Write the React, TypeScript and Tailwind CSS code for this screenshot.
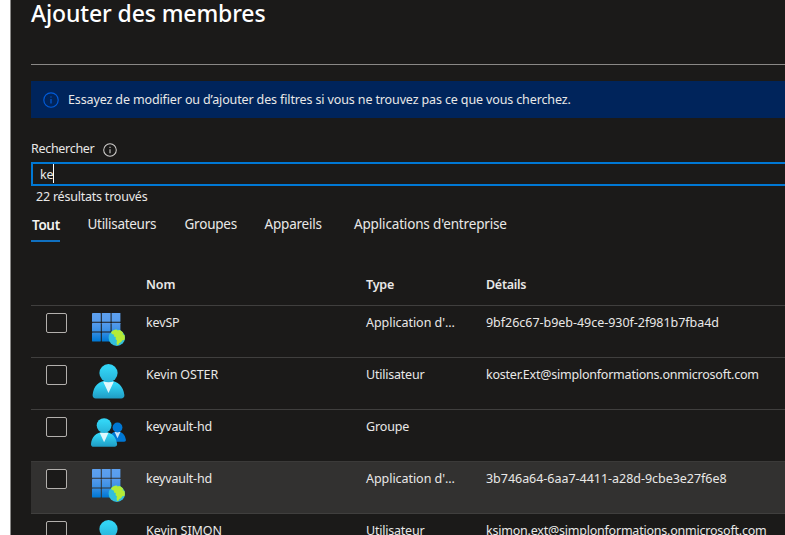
import { useId } from 'react';
import type { ReactNode } from 'react';

type Kind = 'app' | 'user' | 'group';

interface Member {
  name: ReactNode;
  kind: Kind;
  type: ReactNode;
  details?: ReactNode;
  hovered?: boolean;
}

const appType = <span className="tracking-[-0.05px]">Application d'...</span>;
const userType = <span className="tracking-[-0.22px]">Utilisateur</span>;

const members: Member[] = [
  {
    name: <span className="tracking-[-0.15px]">kevSP</span>,
    kind: 'app',
    type: appType,
    details: <span className="tracking-[-0.03px]">9bf26c67-b9eb-49ce-930f-2f981b7fba4d</span>,
  },
  {
    name: <span className="tracking-[-0.12px]">Kevin OSTER</span>,
    kind: 'user',
    type: userType,
    details: <span className="tracking-[-0.22px]">koster.Ext@simplonformations.onmicrosoft.com</span>,
  },
  {
    name: <span className="tracking-[-0.2px]">keyvault-hd</span>,
    kind: 'group',
    type: <span className="tracking-[-0.15px]">Groupe</span>,
  },
  {
    name: <span className="tracking-[-0.2px]">keyvault-hd</span>,
    kind: 'app',
    type: appType,
    details: <span className="tracking-[-0.03px]">3b746a64-6aa7-4411-a28d-9cbe3e27f6e8</span>,
    hovered: true,
  },
  {
    name: <span className="tracking-[-0.08px]">Kevin SIMON</span>,
    kind: 'user',
    type: userType,
    details: <span className="tracking-[-0.22px]">ksimon.ext@simplonformations.onmicrosoft.com</span>,
  },
];

function InfoIcon({ className }: { className: string }) {
  return (
    <svg viewBox="0 0 16 16" className={className} fill="none" stroke="currentColor">
      <circle cx="8" cy="8" r="7.2" strokeWidth="1.15" />
      <path d="M8 7v4.6" strokeWidth="1.2" />
      <path d="M8 4.4v1.2" strokeWidth="1.2" />
    </svg>
  );
}

// Blue 3x3 tile grid with a globe in the lower right corner.
function AppIcon() {
  const id = useId();
  const cells = [0, 9.8, 19.6];
  return (
    <svg viewBox="0 0 36 36" className="block size-9">
      <defs>
        <linearGradient id={id} gradientUnits="userSpaceOnUse" x1="0" y1="0" x2="0" y2="28">
          <stop offset="0" stopColor="#5ea0ef" />
          <stop offset="0.35" stopColor="#559bec" />
          <stop offset="0.65" stopColor="#3a8fe4" />
          <stop offset="1" stopColor="#0078d4" />
        </linearGradient>
      </defs>
      <g transform="translate(1 0)" fill={`url(#${id})`}>
        {cells.map((y) => cells.map((x) => <rect key={`${x}-${y}`} x={x} y={y} width="8.8" height="8.8" rx="0.4" />))}
      </g>
      <circle cx="25.8" cy="24.7" r="8.2" fill="#32bedd" />
      <path
        d="M20.200 18.900c1.500-1.500 3.300-2.300 5.200-2.400l1.300.9 1.600-.5c1.700.6 3.200 1.800 4.200 3.300l-1.200.9 2.100.9c.5 1.700.6 3.400.1 5l-2.200.3-1.100 1.700-2.100 1.300-.8 1.700-1.400-.3-.3-2.300.4-2-1.500-1.500.3-1.800-1.900-.7.300-1.600-1.600-.5-1.300-1z"
        fill="#b4ec36"
      />
    </svg>
  );
}

function UserIcon() {
  const id = useId();
  return (
    <svg viewBox="0 0 36 36" className="block size-9">
      <defs>
        <linearGradient id={`${id}b`} x1="0" y1="0.2" x2="0" y2="1">
          <stop offset="0" stopColor="#32d4f5" />
          <stop offset="1" stopColor="#1f9bc3" />
        </linearGradient>
        <linearGradient id={`${id}h`} x1="0" y1="0" x2="0" y2="1">
          <stop offset="0.2" stopColor="#32d4f5" />
          <stop offset="1" stopColor="#27b2d8" />
        </linearGradient>
      </defs>
      <path
        d="M30.2 35.6c1.900 0 3.400-1.500 3.200-3.500C32.4 24.1 27.600 17.600 17.500 17.600S2.500 23.400 1.600 32.100c-.2 1.900 1.200 3.500 3.200 3.500z"
        fill={`url(#${id}b)`}
      />
      <path d="M12.200 18.700h10.600l-5.300 11.300z" fill="#fff" opacity="0.85" />
      <circle cx="17.5" cy="10.1" r="9.1" fill={`url(#${id}h)`} />
    </svg>
  );
}

function GroupIcon() {
  const id = useId();
  return (
    <svg viewBox="0 0 36 36" className="block size-9">
      <defs>
        <linearGradient id={`${id}b`} x1="0" y1="0.2" x2="0" y2="1">
          <stop offset="0" stopColor="#32d4f5" />
          <stop offset="1" stopColor="#1f9bc3" />
        </linearGradient>
        <linearGradient id={`${id}h`} x1="0" y1="0" x2="0" y2="1">
          <stop offset="0.2" stopColor="#32d4f5" />
          <stop offset="1" stopColor="#27b2d8" />
        </linearGradient>
      </defs>
      <path d="M33.2 25.800c1.100 0 1.900-.9 1.700-2C34.200 19 31.600 15.400 26.500 15.400s-8 3.400-8.500 8.400c-.1 1.100.7 2 1.800 2z" fill="#0078d4" />
      <path d="M23.500 15.800h6l-3 6.400z" fill="#fff" opacity="0.8" />
      <circle cx="26.5" cy="11.5" r="4.9" fill="#0078d4" />
      <path
        d="M23.600 30.800c1.600 0 2.700-1.200 2.500-2.800C25.300 21.500 21.500 15.900 13.100 15.900S.7 21 0 28c-.1 1.600 1 2.800 2.600 2.800z"
        fill={`url(#${id}b)`}
      />
      <path d="M8.700 16.800h8.800l-4.400 9.400z" fill="#fff" opacity="0.85" />
      <circle cx="13.1" cy="9.6" r="7.4" fill={`url(#${id}h)`} />
    </svg>
  );
}

const icons: Record<Kind, ReactNode> = {
  app: <AppIcon />,
  user: (
    <div className="-mt-[2px]">
      <UserIcon />
    </div>
  ),
  group: (
    <div className="-mt-px">
      <GroupIcon />
    </div>
  ),
};

function MemberRow({ member }: { member: Member }) {
  return (
    <div
      className={`flex h-[52px] shrink-0 items-start border-t pt-[7px] ${
        member.hovered ? 'border-[#3b3a39] bg-[#323130]' : 'border-[#403f3e]'
      }`}
    >
      <div className="ml-[15px] h-5 w-[21px] shrink-0 rounded-[2px] border border-[#b3b0ad] bg-[#1b1a19]" />
      <div className="ml-6 w-[55px] shrink-0">{icons[member.kind]}</div>
      <div className="w-[220px] shrink-0">{member.name}</div>
      <div className="w-[120px] shrink-0">{member.type}</div>
      <div className="shrink-0">{member.details}</div>
    </div>
  );
}

export default function App() {
  return (
    <div className="flex h-[535px] w-[785px] overflow-hidden bg-white font-['Noto_Sans','Open_Sans',sans-serif] text-[12.5px] leading-[19px] whitespace-nowrap text-[#e9e8e7]">
      <main className="ml-[10px] flex flex-1 flex-col overflow-hidden border-l border-[#8a8988] bg-[#1b1a19] pl-5">
        <header className="h-[65px] shrink-0 border-b border-[#8a8886]">
          <h1 className="text-[23px] leading-[26px] font-medium tracking-[-0.12px] text-white">Ajouter des membres</h1>
        </header>

        <div className="mt-4 flex h-[37px] shrink-0 items-center bg-[#00245b] pl-3">
          <InfoIcon className="size-4 text-[#015cda]" />
          <span className="ml-[9px] tracking-[-0.13px]">
            Essayez de modifier ou d’ajouter des filtres si vous ne trouvez pas ce que vous cherchez.
          </span>
        </div>

        <div className="mt-[21px] flex h-[19px] shrink-0">
          <label className="w-[72px] tracking-[-0.3px]">Rechercher</label>
          <InfoIcon className="mt-1 size-[14px] text-[#d2d0ce]" />
        </div>
        <div className="mt-1 flex h-6 shrink-0 border-2 border-r-0 border-[#0078d4] pl-[7px]">
          <span className="mt-px w-[13px] tracking-[-0.3px]">ke</span>
          <span className="h-[19px] w-px bg-white" />
        </div>
        <p className="mt-px ml-[5px] h-[19px] shrink-0 tracking-[-0.22px]">22 résultats trouvés</p>

        <nav className="mt-2 flex h-7 shrink-0 text-[13.5px] leading-5">
          <span className="w-[29px] border-b-2 border-[#1070c0] pt-px pl-px font-semibold tracking-[-0.35px] text-[#f3f2f1]">
            Tout
          </span>
          <span className="ml-[27.5px] w-[69px] tracking-[-0.29px]">Utilisateurs</span>
          <span className="ml-7 w-[52px] tracking-[-0.22px]">Groupes</span>
          <span className="ml-7 w-[58px] tracking-[-0.2px]">Appareils</span>
          <span className="ml-[31.5px] tracking-[-0.16px]">Applications d'entreprise</span>
        </nav>

        <div className="flex h-[63px] shrink-0 pt-[33px] pl-[115px] font-semibold">
          <span className="w-[220px] tracking-[-0.1px]">Nom</span>
          <span className="w-[120px] tracking-[-0.2px]">Type</span>
          <span className="tracking-[-0.28px]">Détails</span>
        </div>
        {members.map((member, i) => (
          <MemberRow key={i} member={member} />
        ))}
      </main>
    </div>
  );
}
